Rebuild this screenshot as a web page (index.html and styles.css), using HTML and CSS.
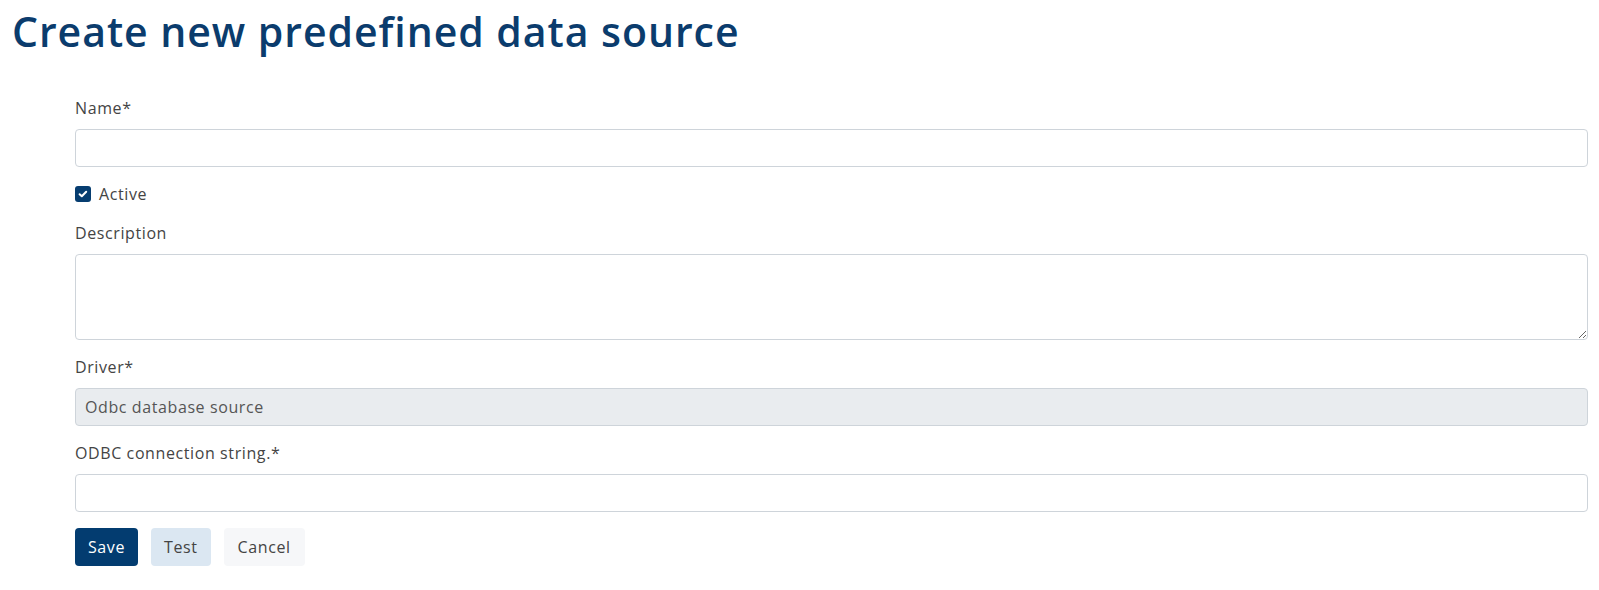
FILE: index.html
```html
<!DOCTYPE html>
<html lang="en">
<head>
<meta charset="utf-8">
<title>Create new predefined data source</title>
<link rel="stylesheet" href="styles.css">
</head>
<body>
<main class="page">
  <h1 class="title">Create new predefined data source</h1>
  <form class="form">
    <div class="group">
      <label class="label" for="name">Name*</label>
      <input class="control" id="name" type="text">
    </div>
    <div class="check-row">
      <span class="checkbox">
        <svg viewBox="0 0 16 16" width="16" height="16" aria-hidden="true"><path d="M4.6 8.2l2.2 2.1 4.4-4.6" fill="none" stroke="#fff" stroke-width="2" stroke-linecap="round" stroke-linejoin="round"/></svg>
      </span>
      <span class="check-label">Active</span>
    </div>
    <div class="group">
      <label class="label" for="desc">Description</label>
      <textarea class="control area" id="desc"></textarea>
    </div>
    <div class="group">
      <label class="label" for="driver">Driver*</label>
      <div class="control disabled" id="driver">Odbc database source</div>
    </div>
    <div class="group">
      <label class="label" for="odbc">ODBC connection string.*</label>
      <input class="control" id="odbc" type="text">
    </div>
    <div class="actions">
      <button type="button" class="btn btn-primary">Save</button>
      <button type="button" class="btn btn-light-blue">Test</button>
      <button type="button" class="btn btn-light">Cancel</button>
    </div>
  </form>
</main>
</body>
</html>
```
FILE: styles.css
```css
* { box-sizing: border-box; }
html, body { margin: 0; padding: 0; background: #fff; }
body {
  font-family: "Open Sans", "Liberation Sans", sans-serif;
  font-size: 16px;
  line-height: 24px;
  letter-spacing: 0.6px;
  color: #444;
}
.page { padding: 0 11px 0 12px; }
.title {
  margin: 0;
  padding-top: 6px;
  font-size: 41px;
  line-height: 50px;
  font-weight: 600;
  color: #0b3c6d;
  letter-spacing: 0.95px;
}
.form {
  margin: 40px 0 0 63px;
  display: flex;
  flex-direction: column;
}
.group { display: flex; flex-direction: column; margin-bottom: 15px; }
.label { display: block; margin-bottom: 9px; color: #444; }
.control {
  display: block;
  width: 100%;
  height: 38px;
  padding: 6px 9px;
  border: 1px solid #ced4da;
  border-radius: 4px;
  font: inherit;
  letter-spacing: inherit;
  color: #555;
  background: #fff;
}
.area { height: 86px; resize: vertical; }
.disabled { background: #e9ecef; }
.check-row {
  display: flex;
  align-items: center;
  gap: 8px;
  height: 24px;
  margin: 0 0 15px;
}
.checkbox {
  width: 16px;
  height: 16px;
  border-radius: 3px;
  background: #063d70;
  display: flex;
}
.check-label { color: #444; }
.actions { display: flex; gap: 13px; margin-top: 1px; }
.btn {
  height: 38px;
  padding: 0 13px;
  border: 0;
  border-radius: 4px;
  font: inherit;
  letter-spacing: inherit;
  cursor: pointer;
}
.btn-light { padding: 0 14px; }
.btn-primary { background: #033c70; color: #fff; }
.btn-light-blue { background: #dbe7f2; color: #444; }
.btn-light { background: #f6f7f9; color: #444; }
```
